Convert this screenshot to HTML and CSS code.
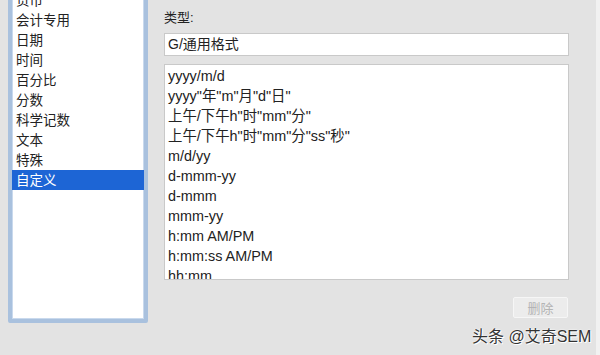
FILE: index.html
```html
<!DOCTYPE html>
<html>
  <head>
  <meta charset="utf-8">
  <link rel="stylesheet" href="styles.css">
  </head>
  <body>
    <div class="window">
      <div class="main">
        <div class="cats">
          <div class="cat">货币</div>
          <div class="cat">会计专用</div>
          <div class="cat">日期</div>
          <div class="cat">时间</div>
          <div class="cat">百分比</div>
          <div class="cat">分数</div>
          <div class="cat">科学记数</div>
          <div class="cat">文本</div>
          <div class="cat">特殊</div>
          <div class="cat selected">自定义</div>
        </div>
        <div class="pane">
          <div class="label">类型:</div>
          <div class="input">G/通用格式</div>
          <div class="formats">
            <div class="fmt">yyyy/m/d</div>
            <div class="fmt">yyyy"年"m"月"d"日"</div>
            <div class="fmt">上午/下午h"时"mm"分"</div>
            <div class="fmt">上午/下午h"时"mm"分"ss"秒"</div>
            <div class="fmt">m/d/yy</div>
            <div class="fmt">d-mmm-yy</div>
            <div class="fmt">d-mmm</div>
            <div class="fmt">mmm-yy</div>
            <div class="fmt">h:mm AM/PM</div>
            <div class="fmt">h:mm:ss AM/PM</div>
            <div class="fmt">hh:mm</div>
            <div class="fmt">hh:mm:ss</div>
          </div>
          <div class="actions">
            <button class="btn" disabled>删除</button>
          </div>
        </div>
      </div>
      <div class="strip"></div>
    </div>
    <div class="watermark">头条 @艾奇SEM</div>
  </body>
</html>
```

FILE: styles.css
```css
body {
  margin: 0;
  width: 600px;
  height: 355px;
  overflow: hidden;
  background: #e3e3e3;
  font-family: "Liberation Sans", "Noto Sans CJK SC", sans-serif;
  color: #222;
  position: relative;
}
.window {
  display: flex;
  height: 355px;
}
.main {
  flex: 1;
  display: flex;
  align-items: flex-start;
  gap: 16px;
  padding-left: 8px;
}
.cats {
  width: 132px;
  height: 329px;
  margin-top: -14px;
  background: #fff;
  border: 4px solid #a9c1de;
  border-radius: 2px;
  box-shadow: inset 0 0 0 1px #c9d9ed;
}
.cat {
  height: 20px;
  line-height: 21px;
  padding-left: 4px;
  font-size: 13.5px;
}
.cat.selected {
  background: #1d65d5;
  color: #fff;
}
.pane {
  width: 405px;
  padding-top: 8px;
}
.label {
  line-height: 20px;
  font-size: 13px;
  margin-bottom: 5px;
}
.input {
  height: 21px;
  line-height: 21px;
  background: #fff;
  border: 1px solid #c9c9c9;
  padding: 0 3px;
  font-size: 14px;
}
.formats {
  margin-top: 8px;
  height: 213px;
  padding-top: 1px;
  background: #fff;
  border: 1px solid #c9c9c9;
  overflow: hidden;
}
.fmt {
  height: 20px;
  line-height: 20px;
  padding-left: 3px;
  font-size: 14.4px;
}
.actions {
  display: flex;
  justify-content: flex-end;
  margin-top: 17px;
  padding-right: 1px;
}
.btn {
  width: 55px;
  height: 21px;
  padding: 0;
  background: #ececec;
  border: 1px solid #f6f6f6;
  border-radius: 2px;
  color: #b4b4b4;
  font-family: "Liberation Sans", "Noto Sans CJK SC", sans-serif;
  font-size: 13px;
}
.strip {
  width: 4px;
  background: #f1f1f1;
}
.watermark {
  position: absolute;
  left: 472px;
  top: 323px;
  font-size: 16px;
  color: #333;
  text-shadow: 0 0 2px #fff, 0 0 1px #fff, 1px 1px 0 #fff;
}
```
